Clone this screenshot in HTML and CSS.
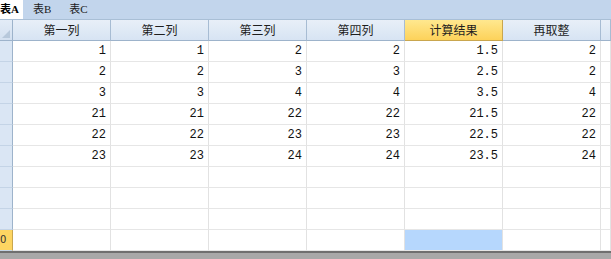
FILE: index.html
```html
<!DOCTYPE html>
<html lang="zh-CN">
  <head>
    <meta charset="UTF-8" />
    <title>表A</title>
    <link rel="stylesheet" href="styles.css">
  </head>
  <body>
    <nav class="tabs">
      <span class="tab active">表A</span>
      <span class="tab">表B</span>
      <span class="tab">表C</span>
    </nav>

    <div class="grid">
      <div class="corner"></div>
      <div class="colhead">第一列</div>
      <div class="colhead">第二列</div>
      <div class="colhead">第三列</div>
      <div class="colhead">第四列</div>
      <div class="colhead current">计算结果</div>
      <div class="colhead">再取整</div>
      <div class="colhead"></div>
    </div>

    <div class="grid body" id="rows"></div>

    <footer class="statusbar"></footer>

    <script>
      // data rows: 第一列..第四列, 计算结果, 再取整
      const data = [
        ["1", "1", "2", "2", "1.5", "2"],
        ["2", "2", "3", "3", "2.5", "2"],
        ["3", "3", "4", "4", "3.5", "4"],
        ["21", "21", "22", "22", "21.5", "22"],
        ["22", "22", "23", "23", "22.5", "22"],
        ["23", "23", "24", "24", "23.5", "24"],
      ];
      const rows = document.getElementById("rows");
      for (let r = 0; r < 10; r++) {
        const last = r === 9;
        const head = document.createElement("div");
        head.className = last ? "rowhead current" : "rowhead";
        head.textContent = last ? "0" : "";
        rows.appendChild(head);
        for (let c = 0; c < 7; c++) {
          const cell = document.createElement("div");
          cell.className = "cell";
          if (last && c === 4) cell.className += " selected";
          if (data[r] && c < 6) cell.textContent = data[r][c];
          rows.appendChild(cell);
        }
      }
    </script>
  </body>
</html>
```

FILE: styles.css
```css
* {
  margin: 0;
  padding: 0;
  box-sizing: border-box;
}

body {
  width: 611px;
  height: 259px;
  overflow: hidden;
  background-color: #ffffff;
  font-family: "DejaVu Sans", "Noto Sans CJK SC", sans-serif;
}

/* Sheet tabs */
.tabs {
  display: flex;
  height: 20px;
  background-color: #c2d5ec;
  border-bottom: 1px solid #a9bfd6;
  font-family: "Liberation Serif", "Noto Sans CJK SC", serif;
  font-size: 11px;
  line-height: 19px;
}

.tab {
  padding: 0 8px 0 10px;
  color: #1b1b1b;
}

.tab.active {
  margin-left: -4px;
  padding: 0 4px 0 4px;
  background-color: #ffffff;
  font-weight: bold;
  color: #000000;
}

/* Grid */
.grid {
  display: grid;
  grid-template-columns: 13px repeat(6, 98px) 1fr;
  grid-auto-rows: 21px;
}

.corner {
  position: relative;
  background: linear-gradient(#e3ecf7, #d3e0f0);
  border-right: 1px solid #9db3cb;
  border-bottom: 1px solid #9db3cb;
}

.corner::after {
  content: "";
  position: absolute;
  right: 2px;
  bottom: 2px;
  border-left: 8px solid transparent;
  border-bottom: 8px solid #b7c8db;
}

.colhead {
  background: linear-gradient(#e8eff8, #d7e4f3);
  border-right: 1px solid #a7bcd3;
  border-bottom: 1px solid #9db3cb;
  font-family: "Noto Sans CJK SC", sans-serif;
  font-size: 12px;
  line-height: 20px;
  text-align: center;
  color: #1e1e1e;
}

.colhead.current {
  background: linear-gradient(#ffe88f, #fdd25a);
  border-right-color: #c9a64e;
  border-bottom-color: #c9a64e;
}

.rowhead {
  background-color: #dae6f4;
  border-right: 1px solid #9db3cb;
  border-bottom: 1px solid #c4d4e6;
  font-size: 10px;
  line-height: 20px;
  color: #333333;
  overflow: hidden;
}

.rowhead.current {
  background-color: #fdd562;
  border-right-color: #c9a64e;
}

.cell {
  border-right: 1px solid #e2e2e2;
  border-bottom: 1px solid #e6e6e6;
  padding-right: 4px;
  text-align: right;
  font-family: "Liberation Mono", monospace;
  font-size: 12px;
  line-height: 20px;
  color: #111111;
}

.cell.selected {
  background-color: #b6d7fd;
}

.statusbar {
  height: 8px;
  background-color: #a8a8a8;
  border-top: 2px solid #6f6f6f;
}
```
